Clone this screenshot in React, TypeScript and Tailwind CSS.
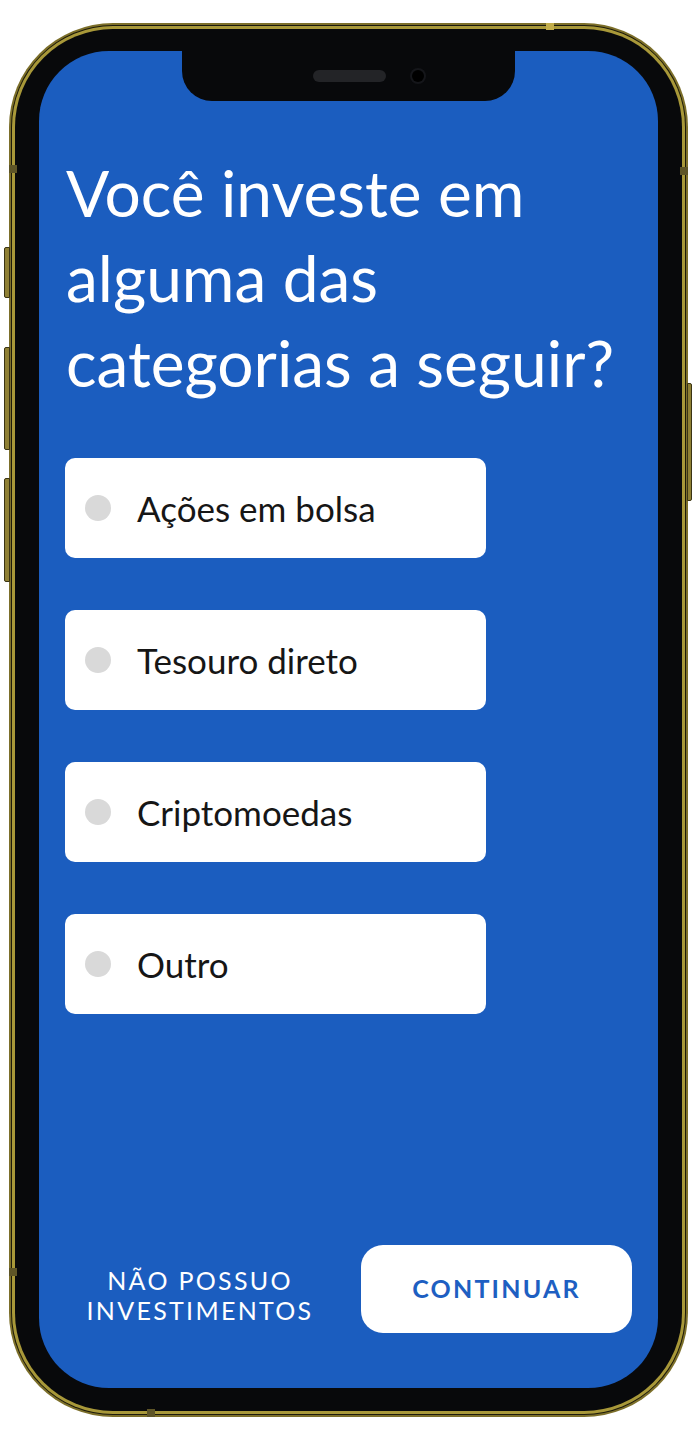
import React from 'react'

const options = ['Ações em bolsa', 'Tesouro direto', 'Criptomoedas', 'Outro']

const OptionCard = ({ label }: { label: string }) => {
  return (
    <div className="flex items-center w-[421px] h-[100px] bg-white rounded-[10px] pl-[20px]">
      <span className="w-[26px] h-[26px] rounded-full bg-[#d9d9d9] shrink-0" />
      <span className="ml-[26px] text-[35px] text-[#161616] leading-none">{label}</span>
    </div>
  )
}

const Phone = ({ children }: { children: React.ReactNode }) => {
  return (
    <div className="relative w-[679px] h-[1394px]">
      {/* side buttons */}
      <div className="absolute left-[-5px] top-[224px] w-[6px] h-[51px] rounded-l-[2px] bg-[#8f8034] border border-[#3a3414]" />
      <div className="absolute left-[-5px] top-[324px] w-[6px] h-[103px] rounded-l-[2px] bg-[#8f8034] border border-[#3a3414]" />
      <div className="absolute left-[-5px] top-[455px] w-[6px] h-[104px] rounded-l-[2px] bg-[#8f8034] border border-[#3a3414]" />
      <div className="absolute right-[-4px] top-[360px] w-[5px] h-[118px] rounded-r-[2px] bg-[#8f8034] border border-[#3a3414]" />

      <div className="w-full h-full rounded-[104px] bg-[#7c6f2a] p-[2px]">
        <div className="w-full h-full rounded-[102px] bg-[#1c1a0b] p-[1px]">
          <div className="w-full h-full rounded-[101px] bg-[#a89839] p-[3px]">
            <div className="relative w-full h-full rounded-[98px] bg-[#08090b] pt-[22px] pb-[23px] px-[24px]">
              {children}
            </div>
          </div>
        </div>
      </div>

      {/* antenna bands */}
      <div className="absolute left-0 top-[142px] w-[8px] h-[8px] bg-[#5e5527]" />
      <div className="absolute right-0 top-[144px] w-[8px] h-[8px] bg-[#5e5527]" />
      <div className="absolute left-[537px] top-0 w-[8px] h-[7px] bg-[#c2ad4a]" />
      <div className="absolute left-0 top-[1245px] w-[8px] h-[8px] bg-[#5e5527]" />
      <div className="absolute left-[138px] bottom-0 w-[8px] h-[8px] bg-[#5e5527]" />
    </div>
  )
}

export default function App() {
  return (
    <div className="w-full h-[1440px] bg-white pt-[23px] pl-[9px] font-['Lato','Open_Sans',sans-serif]">
      <Phone>
        <div className="relative w-full h-full rounded-[70px] bg-[#1b5dbf] flex flex-col overflow-hidden">
          {/* notch */}
          <div className="absolute left-[143px] top-0 w-[333px] h-[50px] bg-[#08090b] rounded-b-[30px] flex items-center gap-[26px] pl-[131px]">
            <span className="w-[73px] h-[12px] rounded-full bg-[#232427]" />
            <span className="w-[12px] h-[12px] rounded-full bg-black ring-2 ring-[#15161a]" />
          </div>

          <h1 className="pt-[99px] pl-[27px] text-white text-[64px] leading-[85px] font-normal">
            Você investe em
            <br />
            alguma das
            <br />
            categorias a seguir?
          </h1>

          <div className="flex flex-col gap-[52px] mt-[53px] pl-[26px]">
            {options.map((o) => (
              <OptionCard key={o} label={o} />
            ))}
          </div>

          <div className="mt-auto flex items-center pb-[55px] pr-[26px]">
            <p className="ml-[26px] w-[270px] pt-[12px] text-center text-white text-[25px] leading-[30px] tracking-[2.3px]">
              NÃO POSSUO
              <br />
              INVESTIMENTOS
            </p>
            <button className="ml-auto w-[271px] h-[88px] rounded-[22px] bg-white text-[#1e5fc2] text-[25px] font-bold tracking-[2.2px]">
              CONTINUAR
            </button>
          </div>
        </div>
      </Phone>
    </div>
  )
}
